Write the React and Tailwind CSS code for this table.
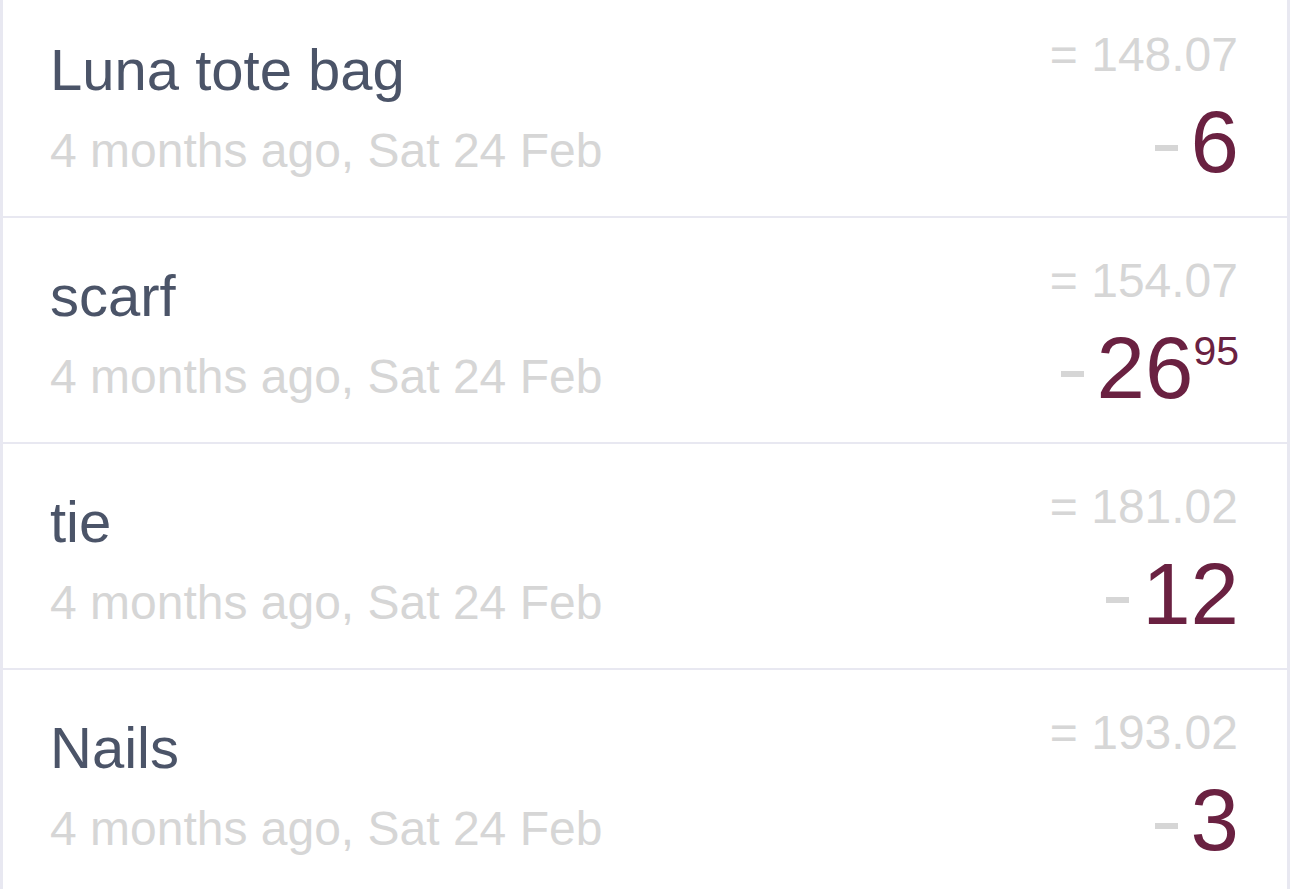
import React from 'react';

const rows = [
  { name: 'Luna tote bag', total: '148.07', whole: '6', cents: null },
  { name: 'scarf', total: '154.07', whole: '26', cents: '95' },
  { name: 'tie', total: '181.02', whole: '12', cents: null },
  { name: 'Nails', total: '193.02', whole: '3', cents: null },
];

export default function App() {
  return (
    <div className="h-[889px] w-[1290px] overflow-hidden bg-white font-['Liberation_Sans',Arial,sans-serif]">
      <div className="-mt-[8px] h-[920px] border-x-[3px] border-[#e8e8f1]">
        {rows.map((r, i) => (
          <div
            key={i}
            className="flex h-[226px] justify-between border-b-2 border-[#e8e8f1] pl-[47px] pr-[48px] pt-[38px]"
          >
            <div>
              <div className="text-[58px] leading-[80px] text-[#4b5468]">{r.name}</div>
              <div className="text-[48px] leading-[81px] text-[#d6d6d6]">4 months ago, Sat 24 Feb</div>
            </div>
            <div className="text-right">
              <div className="mr-[1px] text-[48px] leading-[49px] text-[#d6d6d6]">= {r.total}</div>
              <div className="text-[87px] leading-[126px] text-[#6a2141]">
                <span className="mb-[21px] mr-[13px] inline-block h-[6px] w-[23px] bg-[#d6d6d6]"></span>
                {r.whole}
                {r.cents && (
                  <span className="align-[33px] text-[41px] leading-none">{r.cents}</span>
                )}
              </div>
            </div>
          </div>
        ))}
      </div>
    </div>
  );
}
